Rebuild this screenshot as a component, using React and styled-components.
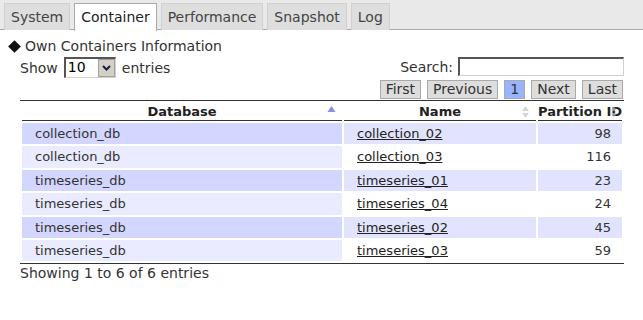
import React from "react";
import styled, { createGlobalStyle, css } from "styled-components";

const Global = createGlobalStyle`
  html, body { margin: 0; padding: 0; background: #fff; }
  body {
    font-family: "DejaVu Sans", Verdana, sans-serif;
    font-size: 13px;
    color: #333;
  }
`;

const TabBar = styled.div`
  display: flex;
  gap: 4px;
  height: 30px;
  padding: 3px 0 0 4px;
  box-sizing: border-box;
  background: #e9e9e9;
  border-bottom: 1px solid #aaa;
`;

const Tab = styled.div`
  box-sizing: border-box;
  height: 27px;
  line-height: 26px;
  padding: 0 6px;
  font-size: 14px;
  color: #444;
  background: #dedede;
  border: 1px solid #d0d0d0;
  border-bottom: none;
  ${(p) =>
    p.$active &&
    css`
      background: #fff;
      color: #222;
      border-color: #aaa;
      height: 28px;
    `}
`;

const Content = styled.div`
  padding: 8px 19px 0 8px;
`;

const Heading = styled.div`
  display: flex;
  align-items: center;
  gap: 4px;
  font-size: 14px;
  line-height: 17px;
  color: #333;
`;

const Diamond = styled.span`
  display: inline-block;
  width: 9px;
  height: 9px;
  margin: 0 2px 0 2px;
  background: #111;
  transform: rotate(45deg);
`;

const Wrapper = styled.div`
  padding-left: 12px;
`;

const TopControls = styled.div`
  display: flex;
  justify-content: space-between;
  align-items: flex-start;
  margin-top: 2px;
`;

const Length = styled.div`
  display: flex;
  align-items: center;
  gap: 6px;
  font-size: 14px;
  height: 21px;
`;

const FakeSelect = styled.div`
  display: flex;
  width: 52px;
  height: 21px;
  box-sizing: border-box;
  border-top: 2px solid #555;
  border-left: 2px solid #555;
  border-right: 1px solid #d4d0c8;
  border-bottom: 1px solid #d4d0c8;
  background: #fff;
`;

const SelectValue = styled.span`
  flex: 1;
  padding-left: 2px;
  line-height: 17px;
  font-size: 14px;
  color: #000;
`;

const SelectButton = styled.span`
  width: 17px;
  box-sizing: border-box;
  background: #d4d0c8;
  border: 1px solid #a0a0a0;
  display: flex;
  align-items: center;
  justify-content: center;
`;

const Filter = styled.label`
  display: flex;
  align-items: center;
  gap: 5px;
  font-size: 14px;
  height: 19px;
`;

const SearchInput = styled.input`
  width: 166px;
  height: 19px;
  box-sizing: border-box;
  border-top: 2px solid #555;
  border-left: 2px solid #555;
  border-right: 1px solid #d4d0c8;
  border-bottom: 1px solid #d4d0c8;
  padding: 0 2px;
  margin: 0;
  outline: none;
`;

const Paging = styled.div`
  display: flex;
  justify-content: flex-end;
  margin-top: 2px;
  margin-right: -2px;
`;

const PageButton = styled.span`
  box-sizing: border-box;
  height: 19px;
  line-height: 17px;
  padding: 0 5px;
  margin: 0 3px;
  font-size: 14px;
  border: 1px solid #aaa;
  background: ${(p) => (p.$active ? "#99b3ff" : "#ddd")};
  color: #333;
`;

const Table = styled.table`
  width: 100%;
  table-layout: fixed;
  border-collapse: separate;
  border-spacing: 2px;
  border-top: 1px solid #333;
  border-bottom: 1px solid #333;
  margin-top: 1px;
`;

const Th = styled.th`
  position: relative;
  padding: 1px 0;
  font-size: 13px;
  line-height: 15px;
  font-weight: bold;
  color: #222;
  text-align: center;
  border-bottom: 1px solid #333;
  white-space: nowrap;
`;

const SortIcon = styled.svg`
  position: absolute;
  top: 2px;
  right: ${(p) => p.$right}px;
  opacity: ${(p) => p.$opacity ?? 1};
`;

const Td = styled.td`
  padding: 3px 12px 3px 13px;
  line-height: 15.4px;
  font-size: 13px;
  color: #333;
  text-align: ${(p) => (p.$num ? "right" : "left")};
  ${(p) => p.$num && css`padding-right: 11px;`}
  background: ${(p) =>
    p.$odd ? (p.$sorted ? "#d3d6ff" : "#e2e4ff") : p.$sorted ? "#eaebff" : "#fff"};
`;

const Link = styled.a`
  color: #222;
  text-decoration: underline;
`;

const Info = styled.div`
  margin-top: 1px;
  font-size: 14px;
  line-height: 17px;
`;

const rows = [
  ["collection_db", "collection_02", 98],
  ["collection_db", "collection_03", 116],
  ["timeseries_db", "timeseries_01", 23],
  ["timeseries_db", "timeseries_04", 24],
  ["timeseries_db", "timeseries_02", 45],
  ["timeseries_db", "timeseries_03", 59],
];

const AscIcon = () => (
  <SortIcon $right={6} width="9" height="14" viewBox="0 0 9 14">
    <path d="M4.5 1 L8.5 7 L0.5 7 Z" fill="#8491dc" />
  </SortIcon>
);

const BothIcon = ({ right, opacity }) => (
  <SortIcon $right={right} $opacity={opacity} width="9" height="14" viewBox="0 0 9 14">
    <path d="M4.5 1 L8 6 L1 6 Z" fill="#d6d6d6" />
    <path d="M4.5 13 L8 8 L1 8 Z" fill="#d6d6d6" />
  </SortIcon>
);

export default function App() {
  return (
    <>
      <Global />
      <TabBar>
        <Tab>System</Tab>
        <Tab $active>Container</Tab>
        <Tab>Performance</Tab>
        <Tab>Snapshot</Tab>
        <Tab>Log</Tab>
      </TabBar>
      <Content>
        <Heading>
          <Diamond />
          Own Containers Information
        </Heading>
        <Wrapper>
          <TopControls>
            <Length>
              Show
              <FakeSelect>
                <SelectValue>10</SelectValue>
                <SelectButton>
                  <svg width="9" height="6" viewBox="0 0 9 6">
                    <path d="M1 1 L4.5 4.5 L8 1" stroke="#1a1a4a" strokeWidth="2" fill="none" />
                  </svg>
                </SelectButton>
              </FakeSelect>
              entries
            </Length>
            <Filter>
              Search:
              <SearchInput type="text" />
            </Filter>
          </TopControls>
          <Paging>
            <PageButton>First</PageButton>
            <PageButton>Previous</PageButton>
            <PageButton $active>1</PageButton>
            <PageButton>Next</PageButton>
            <PageButton>Last</PageButton>
          </Paging>
          <Table>
            <colgroup>
              <col style={{ width: "320px" }} />
              <col style={{ width: "192px" }} />
              <col />
            </colgroup>
            <thead>
              <tr>
                <Th>
                  Database
                  <AscIcon />
                </Th>
                <Th>
                  Name
                  <BothIcon right={6} />
                </Th>
                <Th>
                  <BothIcon right={4} opacity={0.6} />
                  Partition ID
                </Th>
              </tr>
            </thead>
            <tbody>
              {rows.map(([db, name, id], i) => {
                const odd = i % 2 === 0;
                return (
                  <tr key={name}>
                    <Td $odd={odd} $sorted>
                      {db}
                    </Td>
                    <Td $odd={odd}>
                      <Link href="#">{name}</Link>
                    </Td>
                    <Td $odd={odd} $num>
                      {id}
                    </Td>
                  </tr>
                );
              })}
            </tbody>
          </Table>
          <Info>Showing 1 to 6 of 6 entries</Info>
        </Wrapper>
      </Content>
    </>
  );
}
